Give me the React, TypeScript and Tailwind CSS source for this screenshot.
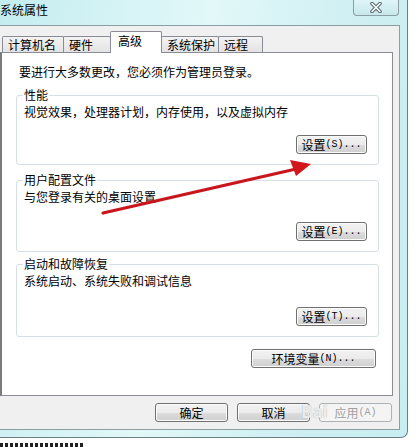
import React from 'react';

const btnBase =
  'flex items-center justify-center h-[19px] rounded-[3px] border text-[12px] leading-none';
const btnOn =
  'border-[#707070] text-black bg-[linear-gradient(#f2f2f2_0%,#ebebeb_50%,#dddddd_51%,#cfcfcf_100%)] shadow-[inset_0_0_0_1px_#fbfbfb]';
const btnOff = 'border-[#adb2b5] text-[#a0a0a0] bg-[#f4f4f4]';

function Btn({ label, hot, className = '', disabled = false }: { label: string; hot?: string; className?: string; disabled?: boolean }) {
  return (
    <div className={`${btnBase} ${disabled ? btnOff : btnOn} ${className}`}>
      <span>{label}</span>
      {hot && <span className="font-['Liberation_Mono',monospace] text-[10px]">{hot}</span>}
    </div>
  );
}

function Group({ title, text, hot, className = '' }: { title: string; text: string; hot: string; className?: string }) {
  return (
    <div className={`relative flex flex-col shrink-0 border border-[#d5dfe5] rounded-[3px] pl-[7px] pt-[8px] ${className}`}>
      <span className="absolute -top-[9px] left-[6px] px-[1px] bg-white leading-[16px]">{title}</span>
      <p className="leading-[16px]">{text}</p>
      <Btn label="设置" hot={hot} className="mt-auto self-end mr-[11px] mb-[10px] w-[71px]" />
    </div>
  );
}

const tabs = [
  { label: '计算机名', w: 'w-[62px] ml-[1px]' },
  { label: '硬件', w: 'w-[48px] -ml-[1px]' },
  { label: '高级', w: 'w-[52px] -ml-[1px]', active: true },
  { label: '系统保护', w: 'w-[58px] -ml-[1px]' },
  { label: '远程', w: 'w-[45px] -ml-[1px]' },
];

export default function App() {
  return (
    <div className="relative w-[418px] h-[447px] overflow-hidden bg-white text-[12px] text-black font-['Noto_Sans_CJK_SC','Liberation_Sans',sans-serif]">
      {/* Window */}
      <div className="relative -ml-[8px] w-[416px] h-[438px] flex flex-col pl-[8px] pr-[7px] pb-[7px] border-r border-b border-[#6b8084] rounded-br-[7px] bg-[linear-gradient(100deg,#c3ecef_0%,#e2f8f9_45%,#cfeff2_75%,#c8eef1_100%)]">
        {/* Title bar */}
        <div className="h-[25px] shrink-0 pt-[2px] leading-[16px]">系统属性</div>
        <div className="absolute left-[361px] top-0 w-[46px] h-[16px] flex items-center justify-center border border-t-0 border-[#8a9ea4] rounded-b-[4px] bg-[linear-gradient(#dff5f7,#c7e9ec)]">
          <svg width="14" height="11" viewBox="0 0 14 11">
            <path d="M3 1.5 L11 9.5 M11 1.5 L3 9.5" stroke="#56676c" strokeWidth="3.6" strokeLinecap="round" />
            <path d="M3 1.5 L11 9.5 M11 1.5 L3 9.5" stroke="#ffffff" strokeWidth="1.6" strokeLinecap="round" />
          </svg>
        </div>

        {/* Client area */}
        <div className="flex-1 flex flex-col bg-[#f0f0f0] border border-l-0 border-[#8b9ea2]">
          {/* Tabs */}
          <div className="relative z-10 flex items-end h-[22px] mt-[5px] -mb-[1px] pl-[1px]">
            {tabs.map((t) =>
              t.active ? (
                <div key={t.label} className={`relative z-10 h-[22px] ${t.w} pl-[7px] pt-[1px] bg-white border border-b-0 border-[#898c95] rounded-t-[2px] leading-[16px]`}>
                  {t.label}
                </div>
              ) : (
                <div key={t.label} className={`h-[16px] mb-[1px] ${t.w} pl-[5px] bg-[linear-gradient(#f3f3f3,#e3e3e3)] border border-b-0 border-[#898c95] rounded-t-[2px] leading-[15px]`}>
                  {t.label}
                </div>
              )
            )}
          </div>

          {/* Panel */}
          <div className="flex flex-col w-[393px] h-[344px] shrink-0 bg-white border border-[#898c95] border-l-2 border-l-[#7a7a7a] pl-[14px] pr-[13px] pt-[11px]">
            <p className="pl-[3px] leading-[16px]">要进行大多数更改，您必须作为管理员登录。</p>
            <Group title="性能" text="视觉效果，处理器计划，内存使用，以及虚拟内存" hot="(S)..." className="mt-[15px] h-[70px]" />
            <Group title="用户配置文件" text="与您登录有关的桌面设置" hot="(E)..." className="mt-[15px] h-[72px]" />
            <Group title="启动和故障恢复" text="系统启动、系统失败和调试信息" hot="(T)..." className="mt-[12px] h-[73px]" />
            <Btn label="环境变量" hot="(N)..." className="mt-[12px] self-end mr-[3px] w-[125px]" />
          </div>

          {/* Dialog buttons */}
          <div className="flex justify-end gap-[9px] mt-[7px] pr-[7px]">
            <Btn label="确定" className="w-[73px]" />
            <Btn label="取消" className="w-[73px]" />
            <Btn label="应用" hot="(A)" className="w-[73px]" disabled />
          </div>
        </div>
      </div>

      {/* page text peeking below */}
      <div className="mt-[5px] h-[4px] w-[85px] bg-[repeating-linear-gradient(90deg,#222_0_3px,transparent_3px_5px)]" />

      {/* watermark */}
      <span className="absolute left-[301px] top-[402px] text-[17px] font-bold leading-none text-white/80 [text-shadow:0_0_1px_#9a9a9a]">Bai</span>

      {/* red annotation arrow */}
      <svg className="absolute inset-0 pointer-events-none" width="418" height="447">
        <defs>
          <filter id="soft" x="-10%" y="-10%" width="120%" height="120%">
            <feGaussianBlur stdDeviation="0.6" />
          </filter>
        </defs>
        <g filter="url(#soft)">
          <line x1="103" y1="213" x2="296" y2="169" stroke="#c8161d" strokeWidth="3.2" strokeLinecap="round" />
          <polygon points="311,164 290,160 296,176" fill="#d3141a" />
        </g>
      </svg>
    </div>
  );
}
